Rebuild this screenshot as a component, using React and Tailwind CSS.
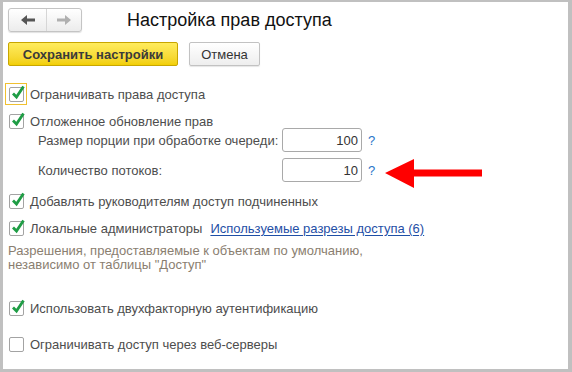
import React from "react";

const font = { fontFamily: '"Liberation Sans", Arial, sans-serif' };

function Check({ checked, focused }) {
  return (
    <div
      className={
        "w-[22px] h-[22px] flex items-center justify-center shrink-0 " +
        (focused ? "border border-[#f0c030]" : "border border-transparent")
      }
    >
      <div className="relative w-[15px] h-[15px] border border-[#a3a3a3] rounded-[2px] bg-white">
        {checked && (
          <svg
            className="absolute left-[1px] top-[-3px]"
            width="14"
            height="15"
            viewBox="0 0 14 15"
          >
            <path
              d="M2 8.5 L5.5 12 L12.5 1.5"
              fill="none"
              stroke="#1f9d45"
              strokeWidth="2.8"
              strokeLinecap="butt"
              strokeLinejoin="miter"
            />
          </svg>
        )}
      </div>
    </div>
  );
}

function CheckRow({ checked, focused, children, className = "" }) {
  return (
    <div className={"flex items-center h-[22px] " + className}>
      <div className="ml-[-3px]">
        <Check checked={checked} focused={focused} />
      </div>
      <div className="ml-[3px] text-[13px] text-[#4d4d4d] leading-none flex items-center whitespace-nowrap">
        {children}
      </div>
    </div>
  );
}

function NumField({ label, value }) {
  return (
    <div className="flex items-center h-[24px]">
      <div className="w-[274px] shrink-0 pl-[30px] text-[13px] text-[#4d4d4d] leading-none whitespace-nowrap">
        {label}
      </div>
      <div className="w-[80px] h-[24px] shrink-0 box-border border border-[#a9a9a9] rounded-[3px] bg-white flex items-center justify-end pr-[3px] text-[13px] text-[#333] leading-none">
        {value}
      </div>
      <div className="ml-[6px] text-[13px] text-[#2a75c8] leading-none">?</div>
    </div>
  );
}

export default function App() {
  return (
    <div
      className="w-[572px] h-[372px] box-border bg-white border-solid border-[#c0c0c0] border-t-2 border-l-[3px] border-r-[4px] border-b-[3px] relative overflow-hidden"
      style={font}
    >
      <div className="pl-[5px] pt-[6px]">
        {/* header */}
        <div className="flex items-center h-[24px]">
          <div className="flex w-[74px] h-[24px] box-border border border-[#c4c4c4] rounded-[3px] bg-gradient-to-b from-white to-[#ececec] shadow-[0_1px_1px_rgba(0,0,0,0.12)]">
            <div className="w-[38px] h-full flex items-center justify-center border-r border-[#d6d6d6]">
              <svg width="14" height="10" viewBox="0 0 14 10">
                <path d="M0 5 L6 0 L6 3.5 L14 3.5 L14 6.5 L6 6.5 L6 10 Z" fill="#555" />
              </svg>
            </div>
            <div className="flex-1 h-full flex items-center justify-center">
              <svg width="14" height="10" viewBox="0 0 14 10">
                <path d="M14 5 L8 0 L8 3.5 L0 3.5 L0 6.5 L8 6.5 L8 10 Z" fill="#b0b0b0" />
              </svg>
            </div>
          </div>
          <div className="ml-[45px] text-[18px] text-[#111] leading-none">Настройка прав доступа</div>
        </div>

        {/* buttons */}
        <div className="flex items-center mt-[10px] h-[24px]">
          <div className="w-[170px] h-[24px] box-border border border-[#c8a600] rounded-[2px] bg-gradient-to-b from-[#ffec5c] to-[#f2cf00] flex items-center justify-center text-[13px] font-bold text-[#3a3a3a] leading-none">
            Сохранить настройки
          </div>
          <div className="ml-[11px] w-[71px] h-[24px] box-border border border-[#c2c2c2] rounded-[2px] bg-gradient-to-b from-white to-[#eeeeee] shadow-[0_1px_1px_rgba(0,0,0,0.1)] flex items-center justify-center text-[13px] text-[#333] leading-none">
            Отмена
          </div>
        </div>

        {/* options */}
        <CheckRow checked focused className="mt-[17px]">
          Ограничивать права доступа
        </CheckRow>
        <CheckRow checked className="mt-[5px]">
          Отложенное обновление прав
        </CheckRow>
        <div className="mt-[-4px]">
          <NumField label="Размер порции при обработке очереди:" value="100" />
        </div>
        <div className="mt-[6px]">
          <NumField label="Количество потоков:" value="10" />
        </div>
        <CheckRow checked className="mt-[8px]">
          Добавлять руководителям доступ подчиненных
        </CheckRow>
        <CheckRow checked className="mt-[5px]">
          <span>Локальные администраторы</span>
          <span className="ml-[8px] text-[#1f4fa6] underline underline-offset-2">
            Используемые разрезы доступа (6)
          </span>
        </CheckRow>
        <div className="mt-[5px] text-[13px] leading-[14px] text-[#8a7e70]">
          Разрешения, предоставляемые к объектам по умолчанию,
          <br />
          независимо от таблицы "Доступ"
        </div>
        <CheckRow checked className="mt-[25px]">
          Использовать двухфакторную аутентификацию
        </CheckRow>
        <CheckRow className="mt-[14px]">
          Ограничивать доступ через веб-серверы
        </CheckRow>
      </div>

      {/* red arrow annotation */}
      <svg
        className="absolute left-[382px] top-[156px]"
        width="100"
        height="32"
        viewBox="0 0 100 32"
      >
        <path d="M0 15 L29 1 L29 11.5 L97 11.5 L97 18.5 L29 18.5 L29 30 Z" fill="#ff0000" />
      </svg>
    </div>
  );
}
